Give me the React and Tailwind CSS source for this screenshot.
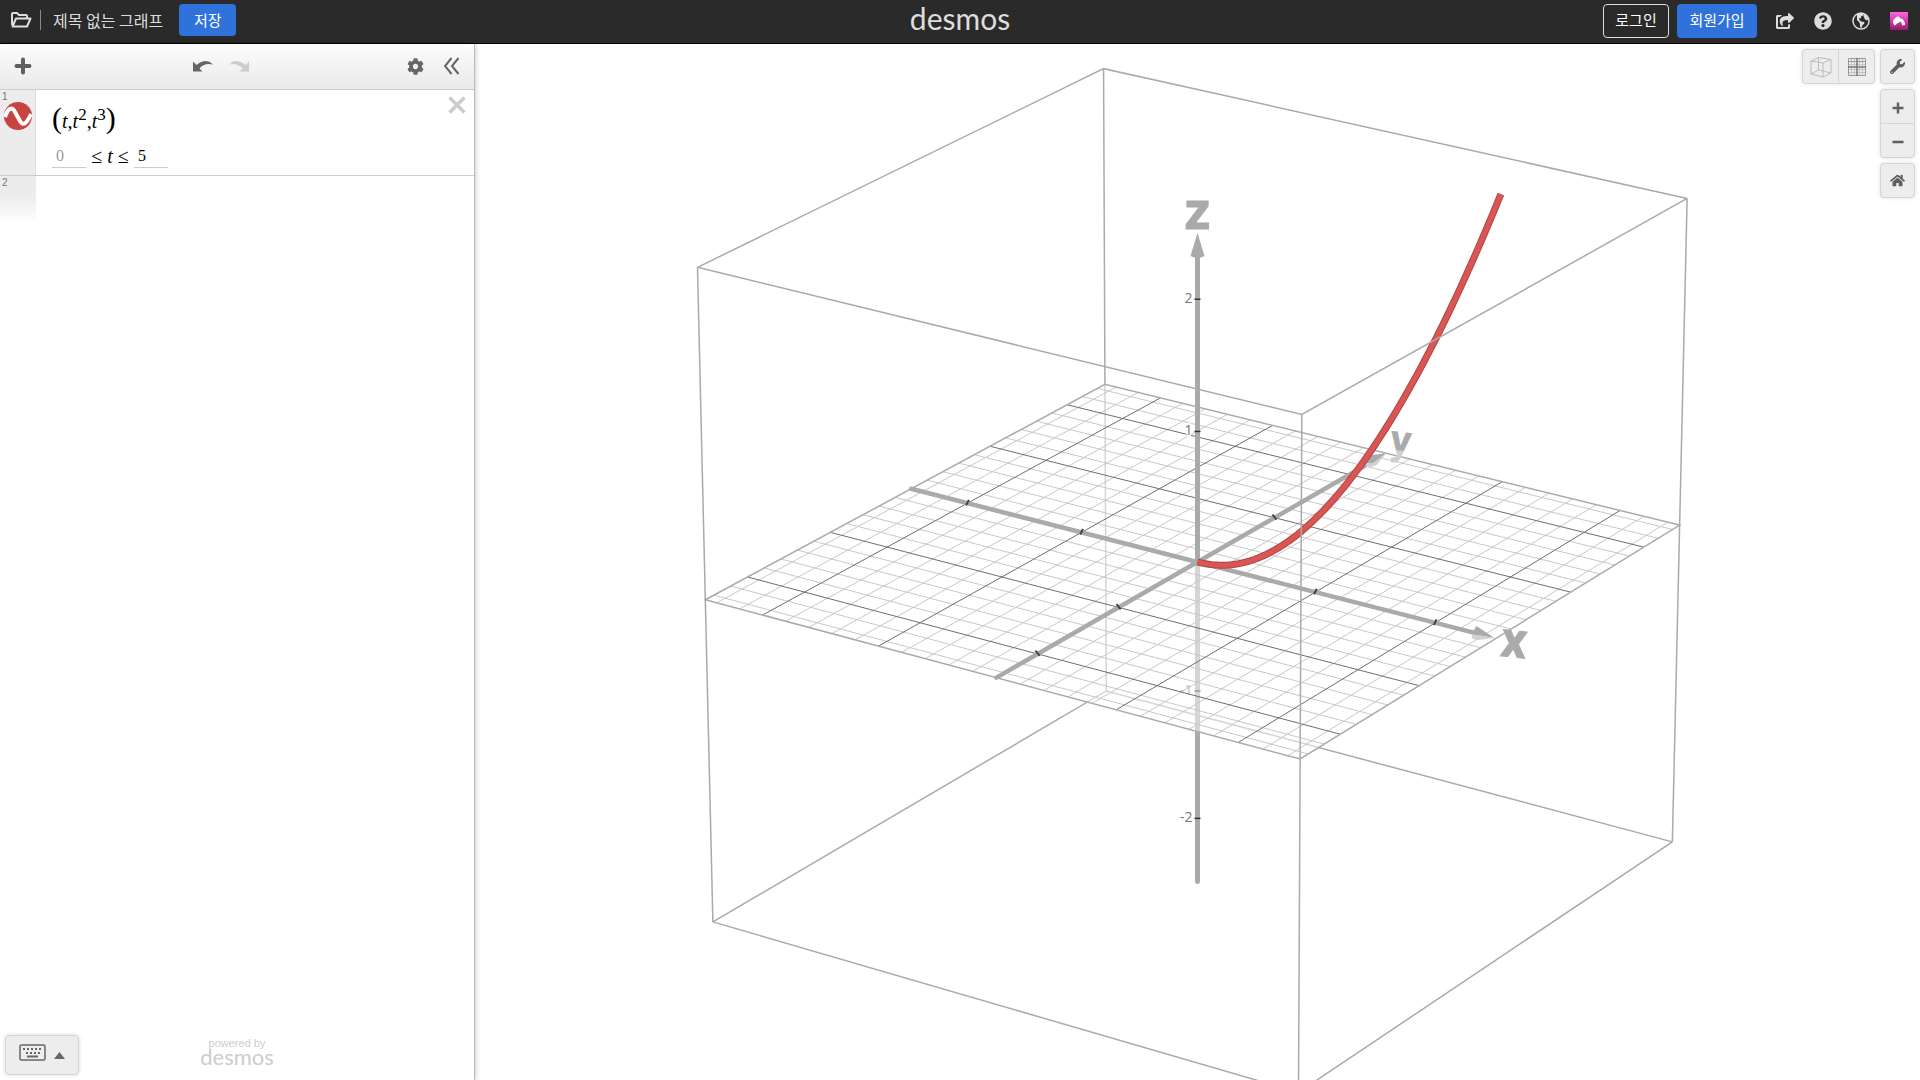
import React, { useState } from 'react';
import {
  FaCog,
  FaHome,
  FaQuestionCircle,
  FaShareSquare,
  FaWrench,
} from 'react-icons/fa';

// camera looks at the origin
const AZIMUTH = (-56.3 * Math.PI) / 180;
const ELEVATION = (22.55 * Math.PI) / 180;
const SCALE = 140.5;
const DISTANCE = 62;
const R = 2.5;

const project = (x, y, z) => {
  const sa = Math.sin(AZIMUTH);
  const ca = Math.cos(AZIMUTH);
  const se = Math.sin(ELEVATION);
  const ce = Math.cos(ELEVATION);
  const right = -sa * x + ca * y;
  const up = -se * ca * x - se * sa * y + ce * z;
  const depth = ce * ca * x + ce * sa * y + se * z;
  const k = SCALE / (1 - depth / DISTANCE);
  return [right * k, -up * k];
};

const toPoints = (list) =>
  list.map((p) => project(...p).map((n) => n.toFixed(2)).join(',')).join(' ');

const Line3 = ({ from, to, ...rest }) => {
  const [x1, y1] = project(...from);
  const [x2, y2] = project(...to);
  return <line x1={x1} y1={y1} x2={x2} y2={y2} {...rest} />;
};

const gridSteps = [];
for (let i = -12; i <= 12; i++) gridSteps.push(i);
const minorSteps = gridSteps.filter((i) => i % 5 !== 0);
const majorSteps = gridSteps.filter((i) => i % 5 === 0 && i !== 0);

// (t, t^2, t^3), cut where it leaves the box
const curve = [];
const tMax = Math.cbrt(R);
for (let i = 0; i <= 60; i++) {
  const t = (tMax * i) / 60;
  curve.push([t, t * t, t * t * t]);
}

const Ticks = ({ values, axis }) =>
  values.map((v) => {
    const d = 0.018;
    if (axis === 'x') {
      return <Line3 key={v} from={[v, -d, -0.01]} to={[v, d, 0.02]} stroke="#444" strokeWidth="2" />;
    }
    if (axis === 'y') {
      return <Line3 key={v} from={[-d, v, 0.02]} to={[d, v, -0.01]} stroke="#444" strokeWidth="2" />;
    }
    const [, y] = project(0, 0, v);
    return <line key={v} x1="-3" y1={y} x2="3" y2={y} stroke="#333" strokeWidth="1.5" />;
  });

const AxisNumber = ({ value }) => (
  <text
    x="-5"
    y={project(0, 0, value)[1] + 4}
    textAnchor="end"
    fontSize="14"
    fill="#777"
    stroke="#fff"
    strokeWidth="3"
    paintOrder="stroke"
    fontFamily='"Open Sans", sans-serif'
  >
    {value}
  </text>
);

const Graph = () => (
  <svg
    className="block h-full w-full"
    viewBox="-722 -518 1444 1036"
    preserveAspectRatio="xMidYMid meet"
    role="img"
    aria-label="3D"
  >
    {/* everything under the xy plane */}
    <g stroke="#aaa" strokeWidth="1.5" fill="none">
      <Line3 from={[-R, R, 0]} to={[-R, R, -R]} />
      <polyline points={toPoints([[-R, -R, -R], [-R, R, -R], [R, R, -R]])} />
      <Line3 from={[0, 0, 0]} to={[0, 0, -R]} strokeWidth="5" strokeLinecap="round" />
    </g>
    <Ticks axis="z" values={[-2, -1]} />
    <AxisNumber value={-1} />
    <AxisNumber value={-2} />

    <polygon
      points={toPoints([[-R, -R, 0], [-R, R, 0], [R, R, 0], [R, -R, 0]])}
      fill="#fff"
      fillOpacity="0.5"
    />
    <g stroke="#c8c8c8" strokeWidth="1">
      {minorSteps.map((i) => (
        <React.Fragment key={i}>
          <Line3 from={[i / 5, -R, 0]} to={[i / 5, R, 0]} />
          <Line3 from={[-R, i / 5, 0]} to={[R, i / 5, 0]} />
        </React.Fragment>
      ))}
    </g>
    <g stroke="#6e6e6e" strokeWidth="1">
      {majorSteps.map((i) => (
        <React.Fragment key={i}>
          <Line3 from={[i / 5, -R, 0]} to={[i / 5, R, 0]} />
          <Line3 from={[-R, i / 5, 0]} to={[R, i / 5, 0]} />
        </React.Fragment>
      ))}
    </g>
    <polygon
      points={toPoints([[-R, -R, 0], [-R, R, 0], [R, R, 0], [R, -R, 0]])}
      fill="none"
      stroke="#aaa"
      strokeWidth="1.5"
    />

    {/* back of the box */}
    <g stroke="#aaa" strokeWidth="1.5" fill="none">
      <Line3 from={[-R, R, 0]} to={[-R, R, R]} />
      <polyline points={toPoints([[-R, -R, R], [-R, R, R], [R, R, R]])} />
    </g>

    {/* x and y axes */}
    <g stroke="#aaa" strokeWidth="4.5">
      <Line3 from={[-R, 0, 0]} to={[2.35, 0, 0]} strokeLinecap="round" />
      <Line3 from={[0, -R, 0]} to={[0, 2.2, 0]} strokeLinecap="round" />
    </g>
    <polygon points="279,64 297,76 274,72" fill="#aaa" />
    <polygon points="274,72 275,77 281,78 297,76" fill="#d0d0d0" />
    <polygon points="164,-99 175,-107 189,-109 176,-99" fill="#aaa" />
    <polygon points="164,-99 176,-99 189,-109 179,-97 173,-95" fill="#d0d0d0" />
    <Ticks axis="x" values={[-2, -1, 1, 2]} />
    <Ticks axis="y" values={[-2, -1, 1]} />

    {/* z axis */}
    <AxisNumber value={1} />
    <AxisNumber value={2} />
    <Line3 from={[0, 0, 0]} to={[0, 0, 2.4]} stroke="#aaa" strokeWidth="5" />
    <path d="M0 -329L7 -306Q0 -302 -7 -306Z" fill="#aaa" />
    <Ticks axis="z" values={[1, 2]} />

    <defs>
      <linearGradient id="yFade" x1="0" y1="0" x2="0" y2="1">
        <stop offset="0.7" stopColor="#aaa" />
        <stop offset="0.75" stopColor="#d0d0d0" />
      </linearGradient>
    </defs>
    <g fill="#aaa" stroke="#aaa" fontWeight="700" textAnchor="middle" fontFamily='"Open Sans", sans-serif'>
      <text x="0" y="-333" fontSize="52">z</text>
      <g fontFamily="Roboto, sans-serif">
        <text fontSize="50" transform="translate(315 95) rotate(6)">x</text>
        <text fontSize="42" fill="url(#yFade)" stroke="none" transform="translate(202 -108) rotate(6)">y</text>
      </g>
    </g>

    {/* parametric curve */}
    <g fill="none" strokeLinejoin="round">
      <polyline points={toPoints(curve)} stroke="#b54444" strokeWidth="7" />
      <polyline points={toPoints(curve)} stroke="#d85654" strokeWidth="5" />
    </g>

    {/* front of the box */}
    <g stroke="#aaa" strokeWidth="1.5" fill="none">
      <polyline points={toPoints([[-R, -R, R], [R, -R, R], [R, R, R]])} />
      <polyline points={toPoints([[-R, -R, -R], [R, -R, -R], [R, R, -R]])} />
      <Line3 from={[-R, -R, -R]} to={[-R, -R, R]} />
      <Line3 from={[R, -R, -R]} to={[R, -R, R]} />
      <Line3 from={[R, R, -R]} to={[R, R, R]} />
    </g>
  </svg>
);

const FolderIcon = () => (
  <svg width="22" height="18" viewBox="0 0 22 18" fill="none" stroke="#ddd" strokeWidth="2" strokeLinejoin="round">
    <path d="M2 14V3Q2 2 3 2H7L9 4H16Q17 4 17 5V7" />
    <path d="M2.500 15.500L6 7.500H20.500L17 15.500Z" />
  </svg>
);

const GlobeIcon = () => (
  <svg width="18" height="18" viewBox="0 0 18 18" fill="#ddd">
    <circle cx="9" cy="9" r="8" fill="none" stroke="#ddd" strokeWidth="1.500" />
    <path d="M5 2L8 1H12L11.500 3.500L9.500 4L8.500 6.500L7 6L7.500 8L9 9.500L12.500 10L12 12L10.500 13L9.500 16L8 15V12L7 10L5 8Z" />
    <path d="M12 2L15 4L16.500 7.500L14 8.500L12.500 6.500L11.500 4Z" />
  </svg>
);

const UndoIcon = ({ color, flip }) => (
  <svg width="20" height="12" viewBox="0 0 20 12" className={flip ? '-scale-x-100' : ''} fill={color}>
    <path d="M0 1.500V11.500H9.500L6.500 8.500Q11 2.500 20 4.500Q13 -2.500 3.500 5Z" />
  </svg>
);

const Header = () => (
  <header className="grid h-11 shrink-0 grid-cols-[1fr_auto_1fr] items-start border-b border-black bg-[#2a2a2a] text-[#ddd]">
    <div className="flex h-10 items-center pl-2.5">
      <button type="button" aria-label="열기"><FolderIcon /></button>
      <span className="ml-2 h-5 w-px bg-[#888]" />
      <h1 className="ml-3 text-[16px]">제목 없는 그래프</h1>
      <button type="button" className="ml-4 h-8 w-[57px] rounded-sm bg-[#2f72dc] text-[15px] text-white">저장</button>
    </div>
    <div className="font-[Lato] text-[30px] leading-9">desmos</div>
    <div className="flex h-10 items-center justify-end pt-px pr-3">
      <a href="#login" className="mr-2 flex h-[34px] w-[66px] items-center justify-center rounded-sm border border-[#ddd] text-[15px] text-white">로그인</a>
      <a href="#signup" className="mr-[19px] flex h-[34px] w-20 items-center justify-center rounded-sm bg-[#2f72dc] text-[15px] text-white">회원가입</a>
      <div className="flex items-center gap-5">
        <button type="button" aria-label="공유"><FaShareSquare size={18} /></button>
        <button type="button" aria-label="도움말"><FaQuestionCircle size={18} /></button>
        <button type="button" aria-label="언어"><GlobeIcon /></button>
        <button type="button" aria-label="메뉴" className="bg-linear-to-b from-[#ff66dd] to-[#99166e]">
          <svg width="18" height="18" viewBox="0 0 18 18" fill="#fff">
            <path d="M3 11Q3 7 5 6.500Q6 4 8.500 4.500Q10 5 10 6.500Q13 6 14 9Q15.500 11 15 13L12 13.500Q12 10 10 9.500Q9 11 7 11.500Q6 13 4.500 13.500Z" />
          </svg>
        </button>
      </div>
    </div>
  </header>
);

const Toolbar = () => (
  <div className="grid h-[46px] shrink-0 grid-cols-3 items-center border-b border-[#ccc] bg-linear-to-b from-[#fcfcfc] to-[#eaeaea] px-3.5 pb-px text-[#666]">
    <div>
      <button type="button" aria-label="추가" className="block">
        <svg width="18" height="18" viewBox="0 0 18 18" stroke="#5f5f5f" strokeWidth="4" strokeLinecap="round">
          <path d="M9 2.500V15.500M2.500 9H15.500" />
        </svg>
      </button>
    </div>
    <div className="flex gap-4 pl-[30px]">
      <button type="button" aria-label="실행 취소"><UndoIcon color="#666" /></button>
      <button type="button" aria-label="다시 실행" disabled><UndoIcon color="#ccc" flip /></button>
    </div>
    <div className="flex items-center justify-end gap-5">
      <button type="button" aria-label="설정"><FaCog size={17} /></button>
      <button type="button" aria-label="목록 숨기기">
        <svg width="16" height="18" viewBox="0 0 16 18" fill="none" stroke="#666" strokeWidth="2">
          <path d="M7.500 1L1 9L7.500 17M14.500 1L8 9L14.500 17" />
        </svg>
      </button>
    </div>
  </div>
);

const ExpressionRow = () => {
  const [min, setMin] = useState('');
  const [max, setMax] = useState('5');

  return (
    <li className="flex h-[86px] border-b border-[#ccc]">
      <div className="w-9 shrink-0 border-r border-[#ddd] bg-[#ececec]">
        <div className="h-3 pt-px pl-0.5 font-[Liberation_Sans] text-[10px] leading-3 text-[#777]">1</div>
        <button type="button" aria-label="색상" className="ml-1 block">
          <svg width="28" height="28" viewBox="0 0 28 28">
            <circle cx="14" cy="14" r="14" fill="#c74440" />
            <path d="M1 15C4 6 8 4 11 10L16 19C19 25 23 21 27 12" fill="none" stroke="#fff" strokeWidth="4" />
          </svg>
        </button>
      </div>
      <div className="flex-1 pt-3 pl-4 font-[Liberation_Serif] text-black">
        <div className="flex h-8 items-center text-[20px] leading-8">
          <span className="text-[30px]">(</span>
          <span className="pt-1.5">
            <i>t</i>,<i>t</i><sup className="text-[17px] leading-none">2</sup>,<i>t</i><sup className="text-[17px] leading-none">3</sup>
          </span>
          <span className="text-[30px]">)</span>
        </div>
        <div className="mt-2.5 flex h-6 items-center text-[20px]">
          <input
            aria-label="최솟값"
            value={min}
            placeholder="0"
            onChange={(e) => setMin(e.target.value)}
            className="h-6 w-[34px] border-b border-[#ccc] px-1 text-[16px] outline-none placeholder:text-[#999]"
          />
          <span className="w-12 text-center leading-5">≤<i> t </i>≤</span>
          <input
            aria-label="최댓값"
            value={max}
            onChange={(e) => setMax(e.target.value)}
            className="h-6 w-[34px] border-b border-[#ccc] px-1 text-[16px] outline-none"
          />
        </div>
      </div>
      <button type="button" aria-label="삭제" className="mt-1.5 mr-2 self-start">
        <svg width="18" height="18" viewBox="0 0 18 18" stroke="#ccc" strokeWidth="3.500">
          <path d="M1.500 1.500L16.500 16.500M16.500 1.500L1.500 16.500" />
        </svg>
      </button>
    </li>
  );
};

const Sidebar = () => (
  <aside className="z-10 flex w-[475px] shrink-0 flex-col border-r border-[#bbb] bg-white shadow-[0_0_6px_rgba(0,0,0,0.25)]">
    <Toolbar />
    <ol>
      <ExpressionRow />
      <li className="flex h-12">
        <div className="w-9 bg-linear-to-b from-[#ececec] from-40% to-white pt-px pl-0.5 font-[Liberation_Sans] text-[10px] leading-3 text-[#777]">2</div>
      </li>
    </ol>
    <footer className="mt-auto grid grid-cols-[1fr_auto_1fr] items-end px-[5px] pb-[5px]">
      <button
        type="button"
        aria-label="키패드"
        className="flex h-10 w-[74px] items-center justify-center gap-2 rounded border border-[#d5d5d5] bg-[#ededed] pb-1.5 shadow-[0_0_4px_rgba(0,0,0,0.15)]"
      >
        <svg width="27" height="17" viewBox="0 0 27 17" fill="none" stroke="#666">
          <rect x="1" y="1" width="25" height="15" rx="1.500" strokeWidth="1.500" />
          <path d="M4 5H24M7 9H22" strokeWidth="2" strokeDasharray="2 2" />
          <path d="M8 12.500H19" strokeWidth="2" />
        </svg>
        <svg width="11" height="7" viewBox="0 0 11 7" className="mt-1.5" fill="#666"><path d="M0 7L5.500 0L11 7Z" /></svg>
      </button>
      <div className="flex flex-col items-center pb-2.5 text-[#ccc]">
        <span className="font-[Liberation_Sans] text-[11px] leading-3">powered by</span>
        <span className="font-[Lato] text-[22px] leading-4">desmos</span>
      </div>
    </footer>
  </aside>
);

const group = 'flex overflow-hidden rounded border border-[#d5d5d5] bg-[#ededed] text-[#5f5f5f] shadow-[0_0_4px_rgba(0,0,0,0.12)]';
const cell = 'flex h-[33px] w-[33px] items-center justify-center';

const GraphControls = () => (
  <div className="absolute top-[5px] right-[5px] flex items-start gap-[5px]">
    <div className={group}>
      <button type="button" aria-label="상자" className="flex h-[33px] w-[35px] items-center justify-center">
        <svg width="22" height="22" viewBox="0 0 22 22" fill="none" stroke="#bbb">
          <path d="M1 5L13 7V21L1 18ZM8.500 1.500L21 3.500V17L8.500 14ZM1 5L8.500 1.500M13 7L21 3.500M13 21L21 17M1 18L8.500 14" />
        </svg>
      </button>
      <button type="button" aria-label="격자" className="flex h-[33px] w-9 items-center justify-center border-l border-[#d5d5d5]">
        <svg width="18" height="18" viewBox="0 0 18 18" fill="none" stroke="#999">
          <path d="M3.500 0V18M6.500 0V18M11.500 0V18M14.500 0V18M0 6.500H18M0 11.500H18M0 14.500H18" stroke="#c4c4c4" />
          <path d="M0.500 0.500H17.500V17.500H0.500ZM0 3.500H18" />
          <path d="M9 0V18M0 9H18" stroke="#777" strokeWidth="1.500" />
        </svg>
      </button>
    </div>
    <div className="flex flex-col gap-[5px]">
      <div className={group}>
        <button type="button" aria-label="설정" className={cell}><FaWrench size={15} /></button>
      </div>
      <div className={`${group} flex-col`}>
        <button type="button" aria-label="확대" className={`${cell} pt-0.5`}>
          <svg width="12" height="12" viewBox="0 0 12 12" stroke="#5f5f5f" strokeWidth="2.500"><path d="M6 0.500V11.500M0.500 6H11.500" /></svg>
        </button>
        <div className="border-t border-[#d5d5d5]">
          <button type="button" aria-label="축소" className={`${cell} pt-0.5`}>
            <svg width="12" height="12" viewBox="0 0 12 12" stroke="#5f5f5f" strokeWidth="2.500"><path d="M0.500 6H11.500" /></svg>
          </button>
        </div>
      </div>
      <div className={group}>
        <button type="button" aria-label="기본 보기" className={cell}><FaHome size={15} /></button>
      </div>
    </div>
  </div>
);

export default function App() {
  return (
    <div className="flex h-screen flex-col overflow-hidden bg-white font-['Noto_Sans_CJK_KR',sans-serif]">
      <Header />
      <div className="flex min-h-0 flex-1">
        <Sidebar />
        <main className="relative min-w-0 flex-1">
          <Graph />
          <GraphControls />
        </main>
      </div>
    </div>
  );
}
